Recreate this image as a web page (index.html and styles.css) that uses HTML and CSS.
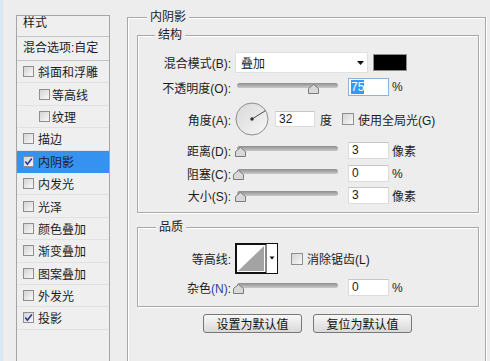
FILE: index.html
```html
<!DOCTYPE html>
<html lang="zh-CN">
<head>
    <meta charset="UTF-8">
    <title>图层样式 - 内阴影</title>
    <link rel="stylesheet" href="styles.css">
</head>
<body>
    <div class="dialog">
        <!-- Style list on the left -->
        <ul class="style-list">
            <li class="list-head first">样式</li>
            <li class="list-head">混合选项:自定</li>
            <li class="item"><span class="box"></span>斜面和浮雕</li>
            <li class="item sub"><span class="box"></span>等高线</li>
            <li class="item sub"><span class="box"></span>纹理</li>
            <li class="item"><span class="box"></span>描边</li>
            <li class="item active"><span class="box"><svg width="9" height="9" viewBox="0 0 9 9"><path d="M1.3 4.6 L3.4 7.2 L7.8 1.4" fill="none" stroke="#2a3690" stroke-width="1.6"/></svg></span>内阴影</li>
            <li class="item"><span class="box"></span>内发光</li>
            <li class="item"><span class="box"></span>光泽</li>
            <li class="item"><span class="box"></span>颜色叠加</li>
            <li class="item"><span class="box"></span>渐变叠加</li>
            <li class="item"><span class="box"></span>图案叠加</li>
            <li class="item"><span class="box"></span>外发光</li>
            <li class="item"><span class="box"><svg width="9" height="9" viewBox="0 0 9 9"><path d="M1.3 4.6 L3.4 7.2 L7.8 1.4" fill="none" stroke="#2a3690" stroke-width="1.6"/></svg></span>投影</li>
        </ul>

        <!-- Inner shadow settings -->
        <div class="group outer">
            <div class="group-title title-outer">内阴影</div>

            <div class="group inner structure">
                <div class="group-title title-structure">结构</div>

                <div class="row row-mode">
                    <span class="label">混合模式(B):</span>
                    <div class="select">
                        <span>叠加</span>
                        <svg class="arrow" width="7" height="4" viewBox="0 0 7 4"><path d="M0 0 H7 L3.5 4 Z" fill="#111"/></svg>
                    </div>
                    <span class="swatch"></span>
                </div>

                <div class="row row-opacity">
                    <span class="label">不透明度(O):</span>
                    <div class="slider">
                        <span class="track"></span>
                        <svg class="thumb" style="left: 73px" width="11" height="10" viewBox="0 0 11 10"><path d="M5.5 0.5 L10.5 4.5 V9.5 H0.5 V4.5 Z" fill="#d9d9d9" stroke="#7b7b7b"/></svg>
                    </div>
                    <span class="field focus"><span class="selected">75</span></span>
                    <span class="unit">%</span>
                </div>

                <div class="row row-angle">
                    <span class="label">角度(A):</span>
                    <svg class="dial" width="34" height="34" viewBox="0 0 34 34">
                        <defs>
                            <linearGradient id="dialFill" x1="0" y1="0" x2="1" y2="1">
                                <stop offset="0" stop-color="#d8d8d8"/>
                                <stop offset="1" stop-color="#f7f7f7"/>
                            </linearGradient>
                        </defs>
                        <circle cx="17" cy="17" r="16" fill="url(#dialFill)" stroke="#8e8e8e"/>
                        <line x1="17" y1="17" x2="30.6" y2="8.6" stroke="#4a4a4a" stroke-width="1"/>
                        <circle cx="17" cy="17" r="1.7" fill="#2e2e2e"/>
                    </svg>
                    <span class="field angle">32</span>
                    <span class="unit deg">度</span>
                    <span class="box big"></span>
                    <span class="check-text">使用全局光(G)</span>
                </div>

                <div class="row row-slider">
                    <span class="label">距离(D):</span>
                    <div class="slider">
                        <span class="track"></span>
                        <svg class="thumb" style="left: 0px" width="11" height="10" viewBox="0 0 11 10"><path d="M5.5 0.5 L10.5 4.5 V9.5 H0.5 V4.5 Z" fill="#d9d9d9" stroke="#7b7b7b"/></svg>
                    </div>
                    <span class="field">3</span>
                    <span class="unit">像素</span>
                </div>

                <div class="row row-slider">
                    <span class="label">阻塞(C):</span>
                    <div class="slider">
                        <span class="track"></span>
                        <svg class="thumb" style="left: -2px" width="11" height="10" viewBox="0 0 11 10"><path d="M5.5 0.5 L10.5 4.5 V9.5 H0.5 V4.5 Z" fill="#d9d9d9" stroke="#7b7b7b"/></svg>
                    </div>
                    <span class="field">0</span>
                    <span class="unit">%</span>
                </div>

                <div class="row row-slider last">
                    <span class="label">大小(S):</span>
                    <div class="slider">
                        <span class="track"></span>
                        <svg class="thumb" style="left: 0px" width="11" height="10" viewBox="0 0 11 10"><path d="M5.5 0.5 L10.5 4.5 V9.5 H0.5 V4.5 Z" fill="#d9d9d9" stroke="#7b7b7b"/></svg>
                    </div>
                    <span class="field">3</span>
                    <span class="unit">像素</span>
                </div>
            </div>

            <div class="group inner quality">
                <div class="group-title title-quality">品质</div>

                <div class="row row-contour">
                    <span class="label">等高线:</span>
                    <svg class="contour" width="43" height="31" viewBox="0 0 43 31">
                        <rect x="0.5" y="0.5" width="42" height="30" fill="#fff" stroke="#111"/>
                        <polygon points="3,28 29,3 29,28" fill="#a3a3a3"/>
                        <path d="M1 1 V30 M1 1 H31 M1 30 H31" stroke="#111" stroke-width="2" fill="none"/>
                        <line x1="31" y1="0" x2="31" y2="31" stroke="#111"/>
                        <path d="M34.5 13.5 H39.5 L37 16.5 Z" fill="#111"/>
                    </svg>
                    <span class="box big"></span>
                    <span class="check-text">消除锯齿(L)</span>
                </div>

                <div class="row row-slider">
                    <span class="label">杂色<span class="key">(N)</span>:</span>
                    <div class="slider">
                        <span class="track"></span>
                        <svg class="thumb" style="left: -2px" width="11" height="10" viewBox="0 0 11 10"><path d="M5.5 0.5 L10.5 4.5 V9.5 H0.5 V4.5 Z" fill="#d9d9d9" stroke="#7b7b7b"/></svg>
                    </div>
                    <span class="field">0</span>
                    <span class="unit">%</span>
                </div>
            </div>

            <div class="buttons">
                <button type="button">设置为默认值</button>
                <button type="button">复位为默认值</button>
            </div>
        </div>
    </div>
</body>
</html>
```

FILE: styles.css
```css
body {
    margin: 0;
    width: 490px;
    height: 361px;
    overflow: hidden;
    background-color: #ededed;
    font-family: "Liberation Sans", "Noto Sans CJK SC", sans-serif;
    font-size: 12px;
    color: #1c1c1c;
}
.dialog {
    display: flex;
    align-items: flex-start;
    height: 361px;
    border-left: 3px solid #dae6f2;
    padding-left: 13px;
}

/* Left style list (runs off the bottom of the window) */
.style-list {
    list-style: none;
    margin: 15px 0 0;
    padding: 0;
    width: 92px;
    height: 345px;
    flex: none;
    border: 1px solid #a5a5a5;
    border-bottom: none;
    background-color: #efefef;
}
.list-head {
    height: 23px;
    line-height: 22px;
    padding-left: 6px;
    border-bottom: 1px solid #c4c4c4;
}
.list-head.first {
    height: 20px;
    line-height: 15px;
}
.item {
    display: flex;
    align-items: center;
    height: 22.4px;
    box-sizing: border-box;
    padding-left: 6px;
    border-bottom: 1px solid #e1e1e1;
}
.item.sub {
    padding-left: 22px;
}
.item.sub .box {
    margin-right: 2px;
}
.item.active {
    background-color: #3592f0;
    border-bottom-color: #3592f0;
}
.box {
    display: inline-flex;
    align-items: center;
    justify-content: center;
    width: 11px;
    height: 11px;
    box-sizing: border-box;
    flex: none;
    border: 1px solid #8f8f8f;
    background: linear-gradient(135deg, #d4d4d4, #f8f8f8);
    margin-right: 4px;
}
.box.big {
    width: 12px;
    height: 12px;
    margin-right: 0;
}

/* Group boxes */
.group {
    border: 1px solid #a8a8a8;
    box-shadow: 1px 1px 0 #ffffff, inset 1px 1px 0 #ffffff;
}
.group-title {
    width: fit-content;
    padding: 0 3px;
    line-height: 16px;
    background-color: #ededed;
    margin-top: -9px;
}
.outer {
    margin: 17px 0 0 17px;
    width: 342px;
    height: 343px;
    padding: 0 6px 0 9px;
    flex: none;
    border-bottom: none;
}
.title-outer {
    margin-left: 10px;
}
.inner {
    width: 340px;
}
.structure {
    margin-top: 10px;
    padding-bottom: 8px;
}
.title-structure {
    margin-left: 17px;
    margin-bottom: 9px;
}
.quality {
    margin-top: 14px;
    padding-bottom: 10px;
}
.title-quality {
    margin-left: 18px;
    margin-bottom: 8px;
}

/* Rows */
.row {
    display: flex;
    align-items: center;
}
.label {
    width: 93px;
    flex: none;
    text-align: right;
    margin-right: 4px;
    white-space: nowrap;
}
.key {
    color: #2a3f9e;
}
.row-mode {
    height: 21px;
}
.row-opacity {
    height: 18px;
    margin-top: 5px;
}
.row-angle {
    height: 34px;
    margin-top: 6px;
}
.row-slider {
    height: 17px;
    margin-top: 6px;
}
.row-slider.last {
    margin-top: 5px;
}
.row-contour {
    height: 31px;
}
.quality .row-slider {
    margin-top: 5px;
}

.select {
    display: flex;
    align-items: center;
    width: 133px;
    height: 21px;
    box-sizing: border-box;
    padding-left: 5px;
    background-color: #ffffff;
    border: 1px solid #e0e0e0;
}
.select .arrow {
    margin-left: auto;
    margin-right: 3px;
}
.swatch {
    width: 34px;
    height: 17px;
    box-sizing: border-box;
    margin-left: 5px;
    background-color: #000000;
    border: 1px solid #8d8d8d;
}

.slider {
    position: relative;
    width: 105px;
    height: 17px;
    flex: none;
}
.track {
    display: block;
    height: 5px;
    margin: 4px 2px 0;
    border-radius: 3px;
    background: linear-gradient(#8e8e8e, #c9c9c9);
}
.thumb {
    position: absolute;
    top: 5px;
}

.field {
    width: 41px;
    height: 17px;
    box-sizing: border-box;
    margin-left: 8px;
    padding-left: 3px;
    line-height: 15px;
    background-color: #ffffff;
    border: 1px solid #dcdcdc;
    border-top-color: #c6c6c6;
}
.field.focus {
    height: 18px;
    padding-left: 2px;
    line-height: 16px;
    border-color: #8fb2da;
}
.selected {
    background-color: #3399ff;
    color: #ffffff;
}
.field.angle {
    width: 40px;
    height: 16px;
    line-height: 14px;
    margin-left: 6px;
}
.unit {
    margin-left: 3px;
}
.unit.deg {
    margin-left: 5px;
    margin-right: 10px;
}
.check-text {
    margin-left: 4px;
}
.dial {
    flex: none;
}
.contour {
    flex: none;
    margin-right: 13px;
}

/* Bottom buttons */
.buttons {
    display: flex;
    gap: 11px;
    margin-top: 7px;
    padding-left: 66px;
}
button {
    width: 99px;
    height: 19px;
    padding: 0;
    font-family: "Liberation Sans", "Noto Sans CJK SC", sans-serif;
    font-size: 12px;
    color: #111111;
    border: 1px solid #777777;
    border-radius: 3px;
    background: linear-gradient(#f8f8f8, #d9d9d9);
}
```
